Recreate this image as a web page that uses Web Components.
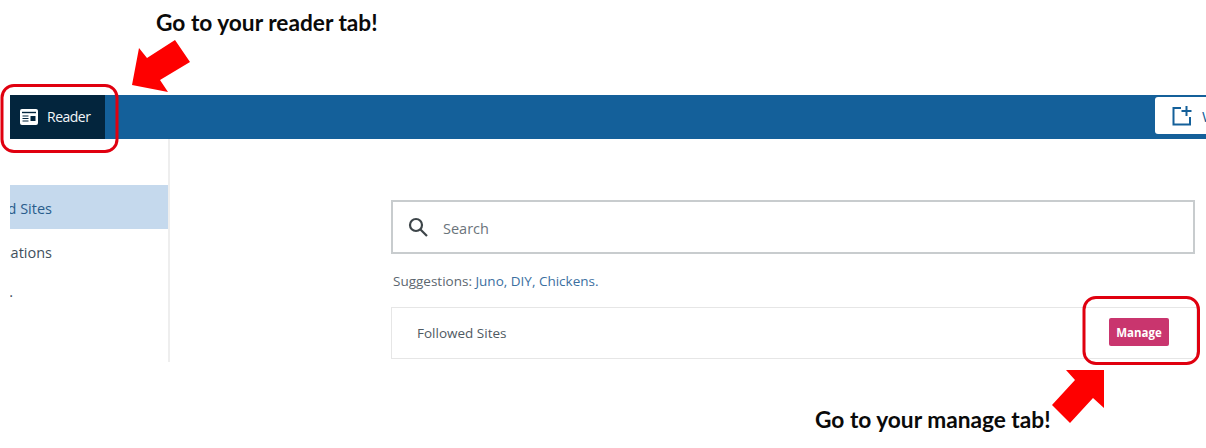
<!DOCTYPE html>
<html>
<head>
<meta charset="utf-8">
<title>Reader</title>
<style>
    html, body { margin: 0; padding: 0; background: #fff; overflow: hidden; }
    body { width: 1206px; height: 448px; font-family: "Open Sans", "Liberation Sans", sans-serif; }
</style>
</head>
<body>
<help-page></help-page>

<script>
// 상단 바
class TopBar extends HTMLElement {
    constructor() {
        super();
        this.attachShadow({ mode: 'open' });
        this.shadowRoot.innerHTML = `
            <style>
                :host { display: flex; height: 44px; margin-left: 10px; background: #14609a; overflow: hidden; align-items: flex-start; }
                .tab { display: flex; align-items: center; gap: 9px; width: 95px; height: 44px; box-sizing: border-box; padding: 0 0 1px 10px;
                       background: #03253d; color: #f2f6f9; font-size: 14px; letter-spacing: -0.5px; }
                .write { display: flex; align-items: center; gap: 10px; flex-shrink: 0; margin: 2px -50px 0 auto; width: 101px; height: 37px; box-sizing: border-box;
                         padding-left: 17px; background: #fff; border-radius: 3px; color: #14609a; font-size: 15px; }
                svg { display: block; flex-shrink: 0; }
            </style>
            <div class="tab">
                <svg width="18" height="18" viewBox="0 0 18 18">
                    <rect x="0" y="1" width="18" height="16" rx="2" fill="#fff"/>
                    <path d="M2 4.500h14" stroke="#03253d" stroke-width="1.400"/>
                    <path d="M2.500 8h6M2.500 10.500h6M2.500 13h6" stroke="#03253d" stroke-width="1.100"/>
                    <rect x="10.500" y="8" width="5" height="5" fill="#03253d"/>
                </svg>
                <span>Reader</span>
            </div>
            <div class="write">
                <svg width="20" height="20" viewBox="0 0 20 20" fill="none" stroke="#14609a" stroke-width="2">
                    <path d="M9 2H1.500v16.500h16.500V11"/>
                    <path d="M14.500 0v10M9.500 5h10"/>
                </svg>
                <span>Write</span>
            </div>
        `;
    }
}
customElements.define('top-bar', TopBar);

// 사이드바 메뉴 항목
class SideItem extends HTMLElement {
    constructor() {
        super();
        this.attachShadow({ mode: 'open' });
        this.shadowRoot.innerHTML = `
            <style>
                :host { display: flex; justify-content: flex-end; align-items: center; height: 44px; box-sizing: border-box; padding: 2px 116px 0 0;
                        overflow: hidden; white-space: nowrap; font-size: 14.500px; color: #3f4f5c; flex-shrink: 0; }
                :host([selected]) { background: #c5d9ed; color: #2a5d8c; }
                :host([stub]) { padding: 0 155px 8px 0; }
            </style>
            <slot></slot>
        `;
    }
}
customElements.define('side-item', SideItem);

class SideBar extends HTMLElement {
    constructor() {
        super();
        this.attachShadow({ mode: 'open' });
        this.shadowRoot.innerHTML = `
            <style>
                :host { display: flex; flex-direction: column; width: 160px; height: 223px; box-sizing: border-box; padding-top: 46px;
                        border-right: 2px solid #eeeeee; flex-shrink: 0; }
            </style>
            <slot></slot>
        `;
    }
}
customElements.define('side-bar', SideBar);

class SearchBox extends HTMLElement {
    constructor() {
        super();
        this.attachShadow({ mode: 'open' });
        this.shadowRoot.innerHTML = `
            <style>
                :host { display: flex; align-items: center; gap: 15px; width: 804px; height: 54px; box-sizing: border-box; padding-left: 15px;
                        border: 2px solid #c8ccce; color: #6b747b; font-size: 14.500px; }
                svg { display: block; }
                span { padding-top: 3px; }
            </style>
            <svg width="20" height="20" viewBox="0 0 20 20" fill="none" stroke="#3d4549" stroke-width="2.200">
                <circle cx="8" cy="8" r="6"/>
                <path d="M12.500 12.500L19 19"/>
            </svg>
            <span>Search</span>
        `;
    }
}
customElements.define('search-box', SearchBox);

class SiteCard extends HTMLElement {
    constructor() {
        super();
        this.attachShadow({ mode: 'open' });
        this.shadowRoot.innerHTML = `
            <style>
                :host { display: flex; align-items: center; justify-content: space-between; width: 806px; height: 52px; box-sizing: border-box;
                        padding: 0 27px 0 25px; border: 1px solid #e6e6e6; color: #4f5a63; font-size: 13.500px; }
                .manage { width: 60px; height: 28px; margin-bottom: 2px; display: flex; align-items: center; justify-content: center; background: #c9356e; border-radius: 2px;
                          color: #fff; font-size: 11.500px; font-weight: 700; }
            </style>
            <span><slot></slot></span>
            <div class="manage">Manage</div>
        `;
    }
}
customElements.define('site-card', SiteCard);

// 빨간 안내 표시 (스크린샷 위에 덧그린 것)
class HelpMarks extends HTMLElement {
    constructor() {
        super();
        this.attachShadow({ mode: 'open' });
        this.shadowRoot.innerHTML = `
            <style>
                :host { position: absolute; left: 0; top: 0; width: 1206px; height: 448px; pointer-events: none; }
                svg { position: absolute; left: 0; top: 0; }
                .note { position: absolute; font-family: Lato, "Liberation Sans", sans-serif; font-weight: 700; color: #0a0a0a; font-size: 22.700px; white-space: nowrap; line-height: 28px; }
            </style>
            <svg width="1206" height="448" fill="none">
                <rect x="2" y="85.500" width="115" height="66" rx="12" stroke="#e0000f" stroke-width="3"/>
                <rect x="1084" y="297.500" width="114.500" height="66" rx="12" stroke="#e0000f" stroke-width="3"/>
                <polygon fill="#fe0000" points="175,40 190,62 160,80 168,92 132,85 139,48 147,58"/>
                <polygon fill="#fe0000" points="1066,370 1104,370 1104,408 1093,398 1070,423 1052,405 1075,380"/>
            </svg>
            <div class="note" style="left:156px;top:9px">Go to your reader tab!</div>
            <div class="note" style="left:815px;top:406px">Go to your manage tab!</div>
        `;
    }
}
customElements.define('help-marks', HelpMarks);

class HelpPage extends HTMLElement {
    constructor() {
        super();
        this.attachShadow({ mode: 'open' });
        this.shadowRoot.innerHTML = `
            <style>
                :host { display: block; position: relative; width: 1206px; height: 448px; padding-top: 95px; box-sizing: border-box; overflow: hidden; }
                .body { display: flex; margin-left: 10px; }
                main { padding: 61px 0 0 221px; }
                .hint { margin: 17px 0 16px 2px; height: 20px; line-height: 20px; font-size: 13.500px; color: #5c6770; }
                .hint a { color: #3c6f9f; text-decoration: none; }
            </style>
            <top-bar></top-bar>
            <div class="body">
                <side-bar>
                    <side-item selected>Followed Sites</side-item>
                    <side-item>Conversations</side-item>
                    <side-item stub>.</side-item>
                </side-bar>
                <main>
                    <search-box></search-box>
                    <div class="hint">Suggestions: <a>Juno, DIY, Chickens.</a></div>
                    <site-card>Followed Sites</site-card>
                </main>
            </div>
            <help-marks></help-marks>
        `;
    }
}
customElements.define('help-page', HelpPage);
</script>
</body>
</html>
